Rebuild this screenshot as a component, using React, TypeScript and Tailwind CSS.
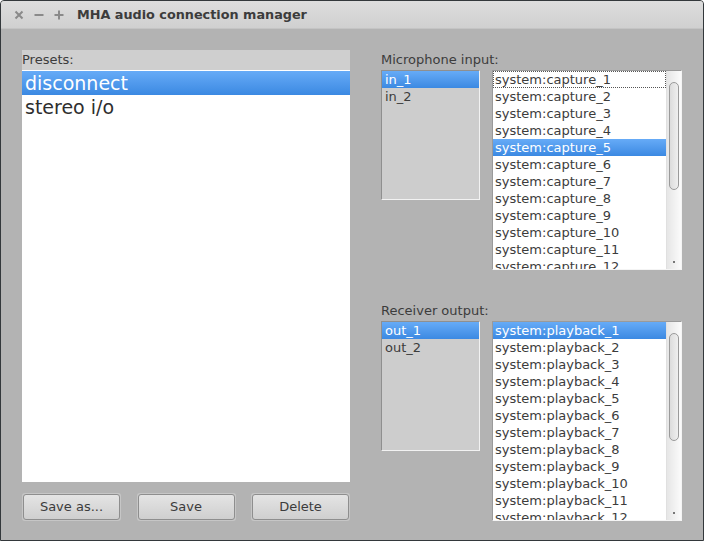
import clsx from 'clsx';

const captures = Array.from({ length: 12 }, (_, i) => `system:capture_${i + 1}`);
const playbacks = Array.from({ length: 12 }, (_, i) => `system:playback_${i + 1}`);

function TitleIcon({ kind }: { kind: 'close' | 'min' | 'max' }) {
  return (
    <svg width="10" height="10" viewBox="0 0 10 10" className="shrink-0">
      {kind === 'close' && (
        <path d="M1.5 1.5 L8.5 8.5 M8.5 1.5 L1.5 8.5" stroke="#8a8a8a" strokeWidth="2" />
      )}
      {kind === 'min' && <path d="M0.5 5 L9.5 5" stroke="#8a8a8a" strokeWidth="2" />}
      {kind === 'max' && <path d="M0.5 5 L9.5 5 M5 0.5 L5 9.5" stroke="#8a8a8a" strokeWidth="2" />}
    </svg>
  );
}

function ChannelList({ items, selected }: { items: string[]; selected: number }) {
  return (
    <div className="w-[99px] h-[130px] bg-[#cdcdcd] border border-t-[#8f8f8f] border-l-[#8f8f8f] border-r-[#f2f2f2] border-b-[#f2f2f2] overflow-hidden">
      {items.map((it, i) => (
        <div
          key={it}
          className={clsx(
            'h-[17px] leading-[17px] pl-[3px] text-[13px]',
            i === selected ? 'bg-linear-to-b from-[#66abf7] to-[#3b89e2] text-white' : 'text-[#3c3c3c]'
          )}
        >
          {it}
        </div>
      ))}
    </div>
  );
}

function PortList({ items, selected, focused }: { items: string[]; selected: number; focused?: number }) {
  return (
    <div className="flex w-[190px] h-[200px] bg-white border border-t-[#9a9a9a] border-l-[#9a9a9a] border-r-[#f4f4f4] border-b-[#f4f4f4] overflow-hidden">
      <div className="flex-1 overflow-hidden">
        {items.map((it, i) => (
          <div
            key={it}
            className={clsx(
              'h-[17px] leading-[17px] pl-[2px] text-[13px] whitespace-nowrap',
              i === selected ? 'bg-linear-to-b from-[#66abf7] to-[#3b89e2] text-white' : 'text-[#3c3c3c]',
              i === focused && 'outline outline-dotted outline-[#555] -outline-offset-1'
            )}
          >
            {it}
          </div>
        ))}
      </div>
      {/* scrollbar */}
      <div className="w-[15px] h-full bg-linear-to-r from-[#e6e6e6] to-[#fbfbfb] border-l border-[#e0e0e0] flex flex-col items-center pt-[11px] pb-[6px]">
        <div className="w-[10px] h-[108px] rounded-full border border-[#9a9a9a] bg-linear-to-r from-[#dcdcdc] to-[#efefef]" />
        <div className="flex-1" />
        <div className="w-[2px] h-[2px] bg-[#777]" />
      </div>
    </div>
  );
}

function Button({ label }: { label: string }) {
  return (
    <div className="w-[99px] h-[28px] p-px bg-[#c6c6c6] rounded-[3px]">
      <div className="h-full rounded-[3px] border border-[#8e8e8e] bg-linear-to-b from-[#e4e4e4] to-[#cfcfcf] flex items-center justify-center text-[13px] text-[#3c3c3c]">
        {label}
      </div>
    </div>
  );
}

export default function App() {
  return (
    <div className="w-[704px] h-[541px] flex flex-col border border-[#33383b] rounded-t-[4px] overflow-hidden bg-[#b3b3b3] font-['DejaVu_Sans',sans-serif]">
      {/* Title bar */}
      <div className="h-[28px] shrink-0 flex items-center bg-linear-to-b from-[#dddddd] to-[#d0d0d0] border-b border-[#c4c4c4]">
        <div className="flex items-center gap-[10px] pl-[13px]">
          <TitleIcon kind="close" />
          <TitleIcon kind="min" />
          <TitleIcon kind="max" />
        </div>
        <span className="ml-[13px] text-[12.8px] font-bold text-[#3c3c3c]">MHA audio connection manager</span>
      </div>

      {/* Body */}
      <div className="flex-1 flex pl-[21px] pt-[21px] pb-[21px] gap-[31px]">
        {/* Presets */}
        <div className="w-[328px] flex flex-col">
          <div className="h-[20px] leading-[20px] bg-[#cfcfcf] text-[13px] text-[#3c3c3c]">Presets:</div>
          <div className="flex-1 bg-white pt-px">
            <div className="h-[24px] leading-[24px] pl-[3px] text-[19px] text-white bg-linear-to-b from-[#66abf7] to-[#3b89e2]">
              disconnect
            </div>
            <div className="h-[24px] leading-[24px] pl-[3px] text-[19px] text-[#2e2e2e]">stereo i/o</div>
          </div>
          <div className="mt-[11px] flex justify-between">
            <Button label="Save as..." />
            <Button label="Save" />
            <Button label="Delete" />
          </div>
        </div>

        {/* Connections */}
        <div className="flex flex-col">
          <div className="h-[20px] leading-[20px] text-[13px] text-[#3c3c3c]">Microphone input:</div>
          <div className="flex gap-[12px] items-start">
            <ChannelList items={['in_1', 'in_2']} selected={0} />
            <PortList items={captures} selected={4} focused={0} />
          </div>
          <div className="mt-[31px] h-[20px] leading-[20px] text-[13px] text-[#3c3c3c]">Receiver output:</div>
          <div className="flex gap-[12px] items-start">
            <ChannelList items={['out_1', 'out_2']} selected={0} />
            <PortList items={playbacks} selected={0} />
          </div>
        </div>
      </div>
    </div>
  );
}
